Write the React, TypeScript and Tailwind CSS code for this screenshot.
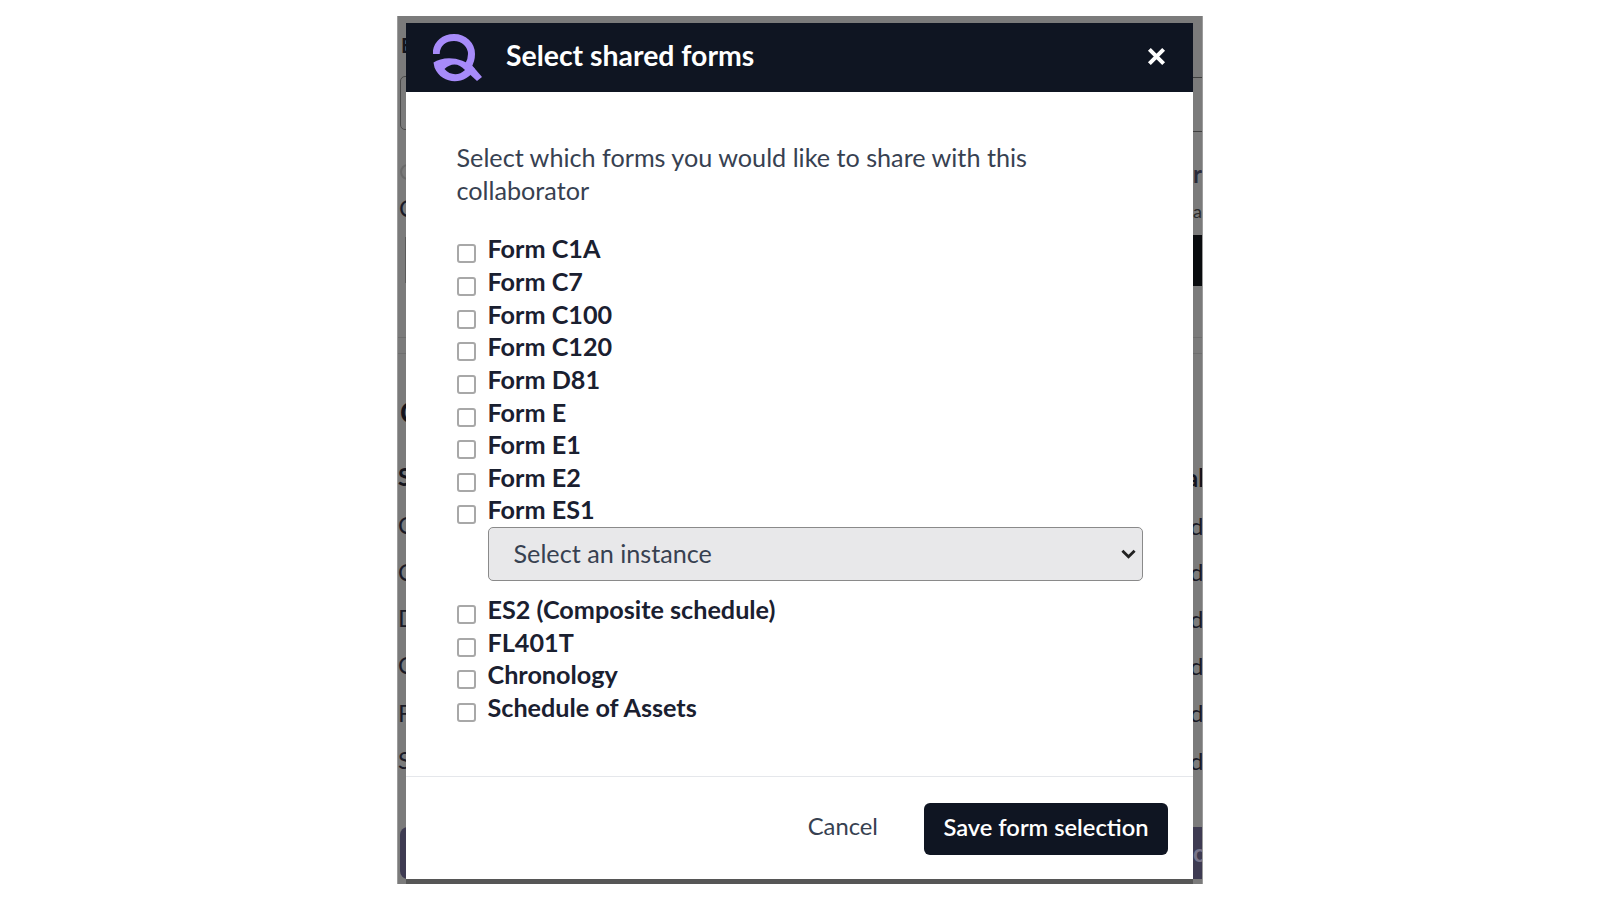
const forms1 = ["Form C1A","Form C7","Form C100","Form C120","Form D81","Form E","Form E1","Form E2","Form ES1"];
const forms2 = ["ES2 (Composite schedule)","FL401T","Chronology","Schedule of Assets"];

function Logo() {
  return (
    <svg width="50" height="48" viewBox="0 0 50 48" fill="none" className="shrink-0">
      <path d="M3.2 20 C3.2 9 12 3.5 21 3.5 C31 3.5 38.5 11 38.5 20 C38.5 25 37 29 35 32" stroke="#a78bfa" strokeWidth="7"/>
      <path d="M0.5 28.5 C10 22 29 22 42 35 C34 51 9 52 1.5 33.5 Z M11.5 35 C18 28.5 26 29 32 36 C26 42 17 41.5 11.5 35 Z" fill="#a78bfa" fillRule="evenodd"/>
      <path d="M37 29 L49 43 L44 47 L32 36 Z" fill="#a78bfa"/>
    </svg>
  );
}

function Row({ label }: { label: string }) {
  return (
    <label className="flex h-[32.65px] items-start">
      <input type="checkbox" className="mt-[12px] mr-[12px] h-[19px] w-[19px] shrink-0 appearance-none rounded-[3px] border-2 border-[#a8a8a8] bg-white" />
      <span className="text-[25.2px] leading-[32px] font-bold text-[#1a2030]">{label}</span>
    </label>
  );
}

function LeftStrip() {
  const c = "h-[24px] text-[24px] leading-[24px] text-[#1a1a26]";
  return (
    <div className="flex w-[8px] shrink-0 flex-col overflow-hidden">
      <span className="mt-[21px] ml-[3px] h-[16px] text-[20px] leading-[16px] font-bold text-[#14141c]">E</span>
      <div className="mt-[23px] ml-[2px] h-[54px] w-[30px] shrink-0 rounded-[5px] border border-[#4a4a4a]" />
      <div className="mt-[34px] ml-[2px] h-[16px] w-[16px] shrink-0 rounded-full border-2 border-[#6a6a6a]" />
      <span className={`mt-[16px] ml-[1px] ${c}`}>C</span>
      <div className="mt-[17px] ml-[7px] h-[46px] w-px shrink-0 bg-[#5a5a5a]" />
      <div className="mt-[54px] h-px shrink-0 bg-[#6e6e6e]" />
      <div className="mt-[15px] h-px shrink-0 bg-[#6e6e6e]" />
      <span className="mt-[44px] ml-[2px] h-[28px] text-[28px] leading-[28px] font-bold text-[#14141c]">C</span>
      <span className="mt-[39px] h-[24px] text-[24px] leading-[24px] font-bold text-[#14141c]">S</span>
      <span className={`mt-[24px] ${c}`}>C</span>
      <span className={`mt-[23px] ${c}`}>C</span>
      <span className={`mt-[22px] ${c}`}>D</span>
      <span className={`mt-[23px] ${c}`}>C</span>
      <span className={`mt-[24px] ${c}`}>F</span>
      <span className={`mt-[23px] ${c}`}>S</span>
      <div className="mt-[55px] ml-[2px] h-[52px] w-[30px] shrink-0 rounded-[8px] bg-[#3e3b52]" />
    </div>
  );
}

function RightStrip() {
  const d = "-ml-[3px] h-[24px] text-[24px] leading-[24px] text-[#1a1a26]";
  return (
    <div className="flex min-w-0 flex-1 flex-col overflow-hidden">
      <div className="mt-[61px] h-px shrink-0 bg-[#3f3f3f]" />
      <div className="mt-[53px] h-px shrink-0 bg-[#3f3f3f]" />
      <span className="mt-[30px] h-[24px] text-[24px] leading-[24px] font-bold text-[#2a2a38]">r</span>
      <span className="mt-[16px] h-[18px] text-[18px] leading-[18px] text-[#2a2a2a]">a</span>
      <div className="mt-[15px] h-[51px] shrink-0 bg-[#090b0e]" />
      <div className="mt-[51px] h-px shrink-0 bg-[#6e6e6e]" />
      <div className="mt-[15px] h-px shrink-0 bg-[#6e6e6e]" />
      <span className="mt-[112px] -ml-[7px] h-[24px] text-[24px] leading-[24px] font-bold text-[#14141c]">al</span>
      <span className={`mt-[24px] ${d}`}>d</span>
      <span className={`mt-[22px] ${d}`}>d</span>
      <span className={`mt-[23px] ${d}`}>d</span>
      <span className={`mt-[23px] ${d}`}>d</span>
      <span className={`mt-[23px] ${d}`}>d</span>
      <span className={`mt-[24px] ${d}`}>d</span>
      <div className="mt-[54px] flex h-[52px] shrink-0 items-center bg-[#3e3b52] text-[24px] font-bold text-[#77748a]">c</div>
    </div>
  );
}

export default function App() {
  return (
    <div className="flex h-[900px] w-[1600px] items-start justify-center bg-white pt-[16px] font-['Lato',sans-serif]">
      <div className="flex h-[868px] w-[806px] overflow-hidden border-x border-[#9c9c9c] bg-[#7b7b7b]">
        <LeftStrip />
        <div className="mt-[7px] flex h-[856px] w-[787px] shrink-0 flex-col bg-white shadow-[0_5px_0_#565656]">
          <div className="flex h-[69px] shrink-0 items-center bg-[#0f1522] px-[27px]">
            <Logo />
            <h1 className="mb-[4px] ml-[23px] flex-1 text-[28.4px] font-bold text-white">Select shared forms</h1>
            <svg width="19" height="19" viewBox="0 0 20 20" fill="none" className="mb-[3px]"><path d="M2.5 2.5 L17.5 17.5 M17.5 2.5 L2.5 17.5" stroke="white" strokeWidth="4.2"/></svg>
          </div>
          <div className="flex-1 pt-[49px] pr-[50px] pl-[50.5px]">
            <p className="w-[620px] text-[25.2px] leading-[32.65px] text-[#374151]">Select which forms you would like to share with this collaborator</p>
            <div className="mt-[26px]">
              {forms1.map((f) => <Row key={f} label={f} />)}
            </div>
            <div className="mt-[1px] ml-[31px] flex h-[54px] w-[655px] items-center justify-between rounded-[5px] border border-[#8a8a8a] bg-[#e8e8ea] pr-[6px] pl-[25px]">
              <span className="mb-[1px] text-[25.2px] text-[#374151]">Select an instance</span>
              <svg width="15" height="10" viewBox="0 0 16 10" fill="none"><path d="M1.5 1.5 L8 8 L14.5 1.5" stroke="#222" strokeWidth="3"/></svg>
            </div>
            <div className="mt-[12px]">
              {forms2.map((f) => <Row key={f} label={f} />)}
            </div>
          </div>
          <div className="flex h-[103px] shrink-0 items-start justify-end border-t border-[#e5e7eb] pt-[26px] pr-[25px]">
            <span className="mt-[6px] mr-[46px] text-[23.8px] text-[#374151]">Cancel</span>
            <button className="h-[52px] w-[244px] rounded-[6px] bg-[#0f1522] pb-[2px] text-[23.7px] font-semibold text-white">Save form selection</button>
          </div>
        </div>
        <RightStrip />
      </div>
    </div>
  );
}
